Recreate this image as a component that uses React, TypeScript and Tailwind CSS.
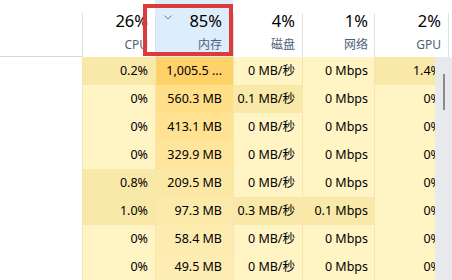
const font = { fontFamily: '"Noto Sans", "Noto Sans CJK SC", sans-serif' };

type Cell = { v: string; bg: string };

const light = "bg-[#fff4c4]";
const mid = "bg-[#f9e9a8]";

const rows: Cell[][] = [
  [{ v: "0.2%", bg: mid }, { v: "1,005.5 ...", bg: "bg-[#ffd169]" }, { v: "0 MB/秒", bg: light }, { v: "0 Mbps", bg: light }, { v: "1.4%", bg: mid }],
  [{ v: "0%", bg: light }, { v: "560.3 MB", bg: "bg-[#ffdf88]" }, { v: "0.1 MB/秒", bg: mid }, { v: "0 Mbps", bg: light }, { v: "0%", bg: light }],
  [{ v: "0%", bg: light }, { v: "413.1 MB", bg: "bg-[#ffe292]" }, { v: "0 MB/秒", bg: light }, { v: "0 Mbps", bg: light }, { v: "0%", bg: light }],
  [{ v: "0%", bg: light }, { v: "329.9 MB", bg: "bg-[#ffe59b]" }, { v: "0 MB/秒", bg: light }, { v: "0 Mbps", bg: light }, { v: "0%", bg: light }],
  [{ v: "0.8%", bg: mid }, { v: "209.5 MB", bg: "bg-[#fce8a5]" }, { v: "0 MB/秒", bg: light }, { v: "0 Mbps", bg: light }, { v: "0%", bg: light }],
  [{ v: "1.0%", bg: mid }, { v: "97.3 MB", bg: "bg-[#fceaaa]" }, { v: "0.3 MB/秒", bg: mid }, { v: "0.1 Mbps", bg: mid }, { v: "0%", bg: light }],
  [{ v: "0%", bg: light }, { v: "58.4 MB", bg: "bg-[#fdecb0]" }, { v: "0 MB/秒", bg: light }, { v: "0 Mbps", bg: light }, { v: "0%", bg: light }],
  [{ v: "0%", bg: light }, { v: "49.5 MB", bg: "bg-[#fdedb3]" }, { v: "0 MB/秒", bg: light }, { v: "0 Mbps", bg: light }, { v: "0%", bg: light }],
];

const cols = [
  { pct: "26%", label: "CPU", w: "w-[73px]", pr: "pr-[7px]" },
  { pct: "85%", label: "内存", w: "w-[78px]", pr: "pr-[11px]" },
  { pct: "4%", label: "磁盘", w: "w-[69px]", pr: "pr-[7px]" },
  { pct: "1%", label: "网络", w: "w-[72px]", pr: "pr-[6px]" },
  { pct: "2%", label: "GPU", w: "w-[74px]", pr: "pr-[7px]" },
];

export default function App() {
  return (
    <div className="relative w-[452px] h-[280px] overflow-hidden bg-white text-black" style={font}>
      {/* header */}
      <div className="flex h-[57px]">
        <div className="w-[82px] border-b border-[#d9d9d9]" />
        {cols.map((c, i) => (
          <div
            key={c.label}
            className={`${c.w} ${c.pr} relative flex flex-col items-end pt-[9px] ${i === 1 ? "bg-[#dcedfb]" : ""}`}
          >
            <div className="absolute left-0 top-[13px] bottom-0 w-px bg-[#e1e1e1]" />
            {i === 1 && (
              <svg className="absolute left-[9px] top-[15px]" width="8" height="5" viewBox="0 0 8 5">
                <path d="M0.5 0.5 L4 4 L7.5 0.5" fill="none" stroke="#7a7f87" strokeWidth="1" />
              </svg>
            )}
            <div className="text-[16.5px] leading-[24px]">{c.pct}</div>
            <div className="text-[12px] leading-[22px] mt-[1px] text-[#4d5f79]">{c.label}</div>
          </div>
        ))}
        <div className="w-[4px] border-l border-[#e1e1e1] mt-[13px]" />
      </div>

      {/* body */}
      <div className="flex">
        <div className="w-[435px] overflow-hidden">
          {rows.map((r, ri) => (
            <div key={ri} className="flex h-[28px] text-[12.5px]">
              <div className="w-[82px] shrink-0 bg-white" />
              {r.map((cell, ci) => (
                <div
                  key={ci}
                  className={`${cols[ci].w} ${cols[ci].pr} ${cell.bg} shrink-0 flex items-center justify-end whitespace-nowrap border-l border-[#f5e6ad]`}
                >
                  {cell.v}
                </div>
              ))}
            </div>
          ))}
        </div>
        <div className="w-[17px] h-[224px] bg-[#e8e9ed] pt-[17px] flex justify-center">
          <div className="w-[2px] h-[36px] bg-[#8a8a8a] ml-[1px]" />
        </div>
      </div>

      {/* annotation box */}
      <div className="absolute left-[143px] top-[4px] w-[90px] h-[52px] border-[4px] border-[#dd3b3b]" />
    </div>
  );
}
